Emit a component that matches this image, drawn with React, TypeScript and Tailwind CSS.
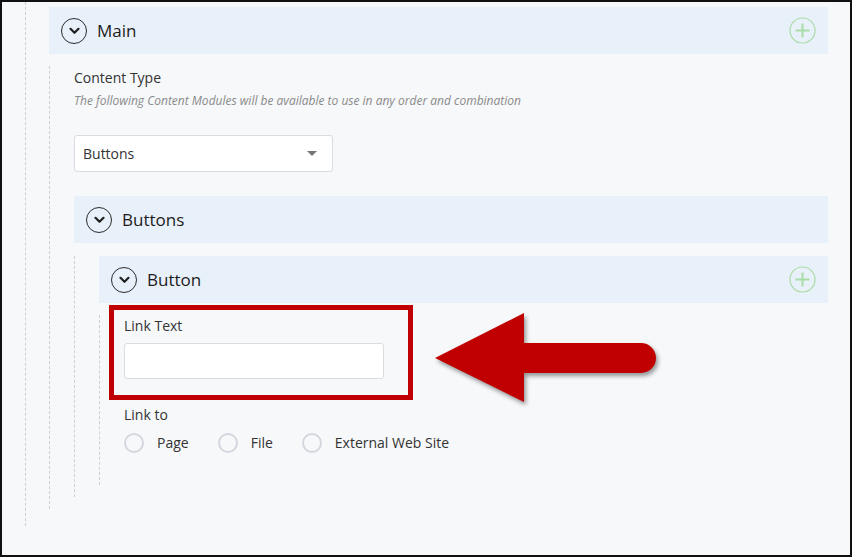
import React from 'react';

const Chevron = () => (
  <span className="flex items-center justify-center w-[26px] h-[26px] rounded-full border-[1.5px] border-[#2b2b2b] shrink-0">
    <svg width="11" height="8" viewBox="0 0 11 8" fill="none">
      <path d="M1.5 1.8 L5.5 5.8 L9.5 1.8" stroke="#1f1f1f" strokeWidth="2.2" strokeLinecap="round" strokeLinejoin="round" />
    </svg>
  </span>
);

const Plus = () => (
  <svg width="27" height="27" viewBox="0 0 27 27" fill="none" className="shrink-0">
    <circle cx="13.5" cy="13.5" r="12.5" stroke="#a9dca6" strokeWidth="1.2" />
    <path d="M13.5 6.5 V20.5 M6.5 13.5 H20.5" stroke="#a9dca6" strokeWidth="2" />
  </svg>
);

const SectionHeader: React.FC<{ title: string; add?: boolean }> = ({ title, add }) => (
  <div className="h-[47px] bg-[#e8f0f9] flex items-center pl-3 pr-3">
    <Chevron />
    <span className="ml-[10px] text-[17px] font-medium text-[#1c1c1c]">{title}</span>
    {add && (
      <span className="ml-auto">
        <Plus />
      </span>
    )}
  </div>
);

const Radio: React.FC<{ label: string }> = ({ label }) => (
  <label className="flex items-center gap-[13px] h-5">
    <span className="w-5 h-5 rounded-full border-2 border-[#d3d8de] bg-[#f6f8fa]" />
    <span className="text-[14px] text-[#333] leading-5">{label}</span>
  </label>
);

export default function App() {
  return (
    <div className="relative w-[852px] h-[557px] border-2 border-[#111] bg-[#f6f8fa] overflow-hidden pr-[22px] font-['Open_Sans',sans-serif]">
      {/* level 0 */}
      <div className="ml-[23px] border-l border-dashed border-[#cdd1d6] pl-[23px] pb-[17px]">
        <div className="pt-[5px]">
          <SectionHeader title="Main" add />
        </div>
        {/* level 1 */}
        <div className="mt-3 border-l border-dashed border-[#cdd1d6] pl-6 pb-3">
          <div className="pt-[2px] text-[14px] leading-5 text-[#333]">Content Type</div>
          <div className="mt-[5px] text-[12px] leading-4 italic text-[#8a8a8a]">
            The following Content Modules will be available to use in any order and combination
          </div>
          <div className="mt-[26px] w-[259px] h-[37px] bg-white border border-[#d9dce0] rounded-[3px] flex items-center pl-2 pr-[15px]">
            <span className="text-[14px] text-[#333]">Buttons</span>
            <span className="ml-auto w-0 h-0 border-l-[5px] border-r-[5px] border-t-[5px] border-l-transparent border-r-transparent border-t-[#777]" />
          </div>
          <div className="mt-6">
            <SectionHeader title="Buttons" />
          </div>
          {/* level 2 */}
          <div className="mt-[13px] border-l border-dashed border-[#cdd1d6] pl-6 pb-3">
            <SectionHeader title="Button" add />
            {/* level 3 */}
            <div className="mt-3 border-l border-dashed border-[#cdd1d6] pl-6 pb-8">
              <div className="pt-[1px] text-[14px] leading-5 text-[#333]">Link Text</div>
              <div className="mt-[7px] w-[260px] h-[36px] bg-white border border-[#d9dce0] rounded-[3px]" />
              <div className="mt-[26px] text-[14px] leading-5 text-[#333]">Link to</div>
              <div className="mt-2 flex items-center gap-[29px]">
                <Radio label="Page" />
                <Radio label="File" />
                <Radio label="External Web Site" />
              </div>
            </div>
          </div>
        </div>
      </div>

      {/* annotation: highlight box */}
      <div className="absolute left-[107px] top-[303px] w-[304px] h-[95px] border-[5px] border-[#c00000]" />

      {/* annotation: arrow */}
      <svg
        className="absolute left-[423px] top-[303px]"
        width="250"
        height="110"
        viewBox="0 0 250 110"
        style={{ filter: 'drop-shadow(2px 3px 2px rgba(0,0,0,0.4))' }}
      >
        <path d="M10 53 L99 8 L99 38 L216 38 A15 15 0 0 1 216 68 L99 68 L99 97 Z" fill="#c00000" />
      </svg>
    </div>
  );
}
